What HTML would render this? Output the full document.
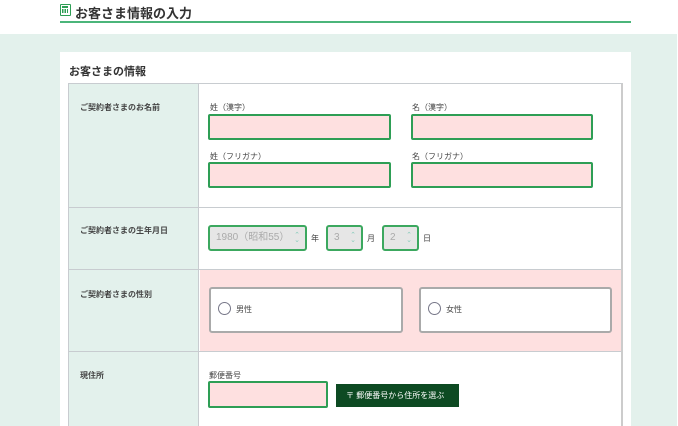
<!DOCTYPE html>
<html><head><meta charset="utf-8"><style>
*{margin:0;padding:0;box-sizing:border-box}
body{width:678px;height:426px;overflow:hidden;background:#fff;font-family:"Liberation Sans","Noto Sans CJK JP",sans-serif;color:#333;position:relative}
.a{position:absolute}
.inp{position:absolute;background:#fee0e0;border:2px solid #2e9e55;border-radius:2px}
.lbl{position:absolute;font-size:8px;color:#444}
.sel{position:absolute;background:#e6e6e6;border:2px solid #3ca85f;border-radius:3px;font-size:10px;line-height:12px;color:#aaa;padding:5px 0 0 6px}
.sel i{position:absolute;right:5px;top:6px;font-style:normal;font-size:7px;color:#8cb;line-height:5px}
.rad{position:absolute;background:#fff;border:2px solid #aaa;border-radius:3px;font-size:8px;color:#444}
.rad span{position:absolute;left:7px;top:13px;width:13px;height:13px;border:1.5px solid #778;border-radius:50%}
.rad b{position:absolute;left:25px;top:15px;font-weight:normal}
.th{position:absolute;left:80px;font-size:8px;font-weight:bold;color:#444}
</style></head><body>
<div class="a" style="left:60px;top:4px;width:11px;height:12px;border:1.5px solid #2e9e55;border-radius:1px">
<div style="position:absolute;left:1px;top:1px;width:6px;height:2px;background:#2e9e55"></div>
<div style="position:absolute;left:1px;top:4px;width:6px;height:4px;background:repeating-linear-gradient(90deg,#2e9e55 0 1.5px,transparent 1.5px 2.5px)"></div></div>
<div class="a" style="left:75px;top:3px;font-size:13px;font-weight:bold;color:#333">お客さま情報の入力</div>
<div class="a" style="left:60px;top:21px;width:571px;height:2px;background:#4bb57a"></div>
<div class="a" style="left:0;top:34px;width:677px;height:392px;background:#e3f1ec"></div>
<div class="a" style="left:60px;top:52px;width:571px;height:374px;background:#fff"></div>
<div class="a" style="left:69px;top:63px;font-size:11px;font-weight:bold;color:#333">お客さまの情報</div>
<div class="a" style="left:68px;top:83px;width:555px;height:343px;border:1px solid #c8ccd0;border-right:2px solid #ccc;border-bottom:none"></div>
<div class="a" style="left:69px;top:84px;width:130px;height:342px;background:#e3f1ec;border-right:1px solid #c8ccd0"></div>
<div class="a" style="left:200px;top:270px;width:421px;height:81px;background:#fee0e0"></div>
<div class="a" style="left:69px;top:207px;width:552px;height:1px;background:#c8ccd0"></div>
<div class="a" style="left:69px;top:269px;width:552px;height:1px;background:#c8ccd0"></div>
<div class="a" style="left:69px;top:351px;width:552px;height:1px;background:#c8ccd0"></div>
<div class="th" style="top:102px">ご契約者さまのお名前</div>
<div class="th" style="top:225px">ご契約者さまの生年月日</div>
<div class="th" style="top:289px">ご契約者さまの性別</div>
<div class="th" style="top:370px">現住所</div>
<div class="lbl" style="left:210px;top:102px">姓（漢字）</div>
<div class="lbl" style="left:412px;top:102px">名（漢字）</div>
<div class="inp" style="left:208px;top:114px;width:183px;height:26px"></div>
<div class="inp" style="left:411px;top:114px;width:182px;height:26px"></div>
<div class="lbl" style="left:210px;top:151px">姓（フリガナ）</div>
<div class="lbl" style="left:412px;top:151px">名（フリガナ）</div>
<div class="inp" style="left:208px;top:162px;width:183px;height:26px"></div>
<div class="inp" style="left:411px;top:162px;width:182px;height:26px"></div>
<div class="sel" style="left:208px;top:225px;width:99px;height:26px">1980（昭和55）<i>⌃<br>⌄</i></div>
<div class="lbl" style="left:311px;top:233px">年</div>
<div class="sel" style="left:326px;top:225px;width:37px;height:26px">3<i>⌃<br>⌄</i></div>
<div class="lbl" style="left:367px;top:233px">月</div>
<div class="sel" style="left:382px;top:225px;width:37px;height:26px">2<i>⌃<br>⌄</i></div>
<div class="lbl" style="left:423px;top:233px">日</div>
<div class="rad" style="left:209px;top:287px;width:194px;height:46px"><span></span><b>男性</b></div>
<div class="rad" style="left:419px;top:287px;width:193px;height:46px"><span></span><b>女性</b></div>
<div class="lbl" style="left:209px;top:370px">郵便番号</div>
<div class="inp" style="left:208px;top:381px;width:120px;height:27px"></div>
<div class="a" style="left:336px;top:384px;width:123px;height:23px;background:#0d4a22;color:#fff;font-size:8px;padding:6px 0 0 10px">〒 郵便番号から住所を選ぶ</div>
</body></html>
